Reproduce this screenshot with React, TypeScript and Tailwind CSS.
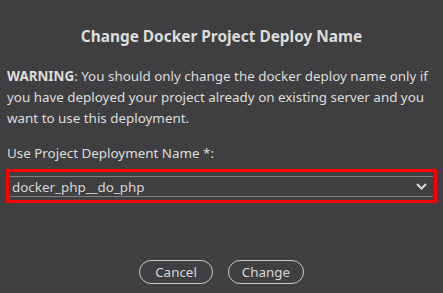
import React from 'react';

const font = { fontFamily: '"Noto Sans", "Open Sans", Arial, sans-serif' };

export default function App() {
  return (
    <div className="w-[443px] h-[293px] bg-[#3f3f41] text-[#e4e4e4] flex flex-col" style={font}>
      <h2 className="mt-[27px] text-center text-[15.4px] font-bold leading-[20px] text-[#dcdcdc]">
        Change Docker Project Deploy Name
      </h2>

      <p className="mt-[19px] px-[7px] text-[13.4px] leading-[21px] text-[#dedede]">
        <span className="font-bold">WARNING</span>: You should only change the docker deploy name only if you have
        deployed your project already on existing server and you want to use this deployment.
      </p>

      <label className="mt-[14px] px-[7px] text-[13.4px] leading-[20px] text-[#dedede]">
        Use Project Deployment Name *:
      </label>

      <div className="mt-[6px] mx-[6px] border-[3px] border-[#ff0000] pt-[4px] pb-[3px] px-[1px]">
        <div className="flex items-center h-[21px] border-y border-[#808080] pl-[2px] pr-[6px]">
          <span className="flex-1 text-[13.4px] leading-[19px] pt-[1px] text-[#d8d8d8]">docker_php__do_php</span>
          <svg width="11" height="7" viewBox="0 0 11 7" className="text-[#dcdcdc]">
            <path d="M1 1l4.5 4.5L10 1" fill="none" stroke="currentColor" strokeWidth="2" />
          </svg>
        </div>
      </div>

      <div className="mt-[57px] flex justify-center gap-[15px]">
        <button className="w-[74px] h-[24px] rounded-full border border-[#c8c8c8] text-[13.4px] text-[#d8d8d8]">
          Cancel
        </button>
        <button className="w-[76px] h-[24px] rounded-full border border-[#c8c8c8] text-[13.4px] text-[#d8d8d8]">
          Change
        </button>
      </div>
    </div>
  );
}
